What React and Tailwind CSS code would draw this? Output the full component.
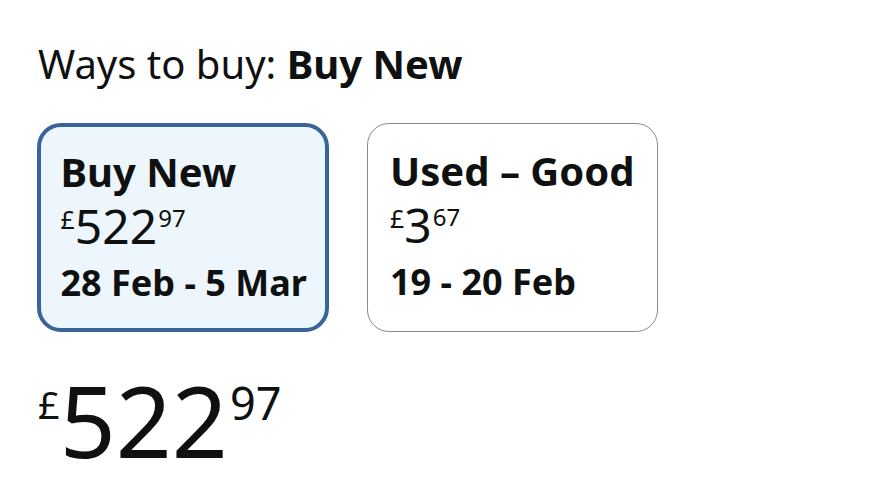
export default function App() {
    return (
        <div className="w-[895px] h-[493px] bg-white text-[#0f1111] px-[38px] pt-[38px] overflow-hidden" style={{ fontFamily: '"Noto Sans", "Open Sans", sans-serif' }}>
            <h2 className="text-[40px] leading-[52px]">
                Ways to buy: <span className="font-bold">Buy New</span>
            </h2>

            <div className="mt-[33px] flex gap-[38px]">
                <div className="w-[292px] h-[209px] -ml-px rounded-[24px] border-[4.5px] border-[#3a6399] bg-[#eef6fd] px-[19.5px] pt-[22.5px]">
                    <div className="text-[40px] font-bold leading-[44px]">Buy New</div>
                    <div className="flex items-start leading-none mt-[8px]">
                        <span className="text-[25px] mt-[5px]">£</span>
                        <span className="text-[48px]">522</span>
                        <span className="text-[24px] mt-[4px] ml-px">97</span>
                    </div>
                    <div className="text-[36px] font-bold leading-[40px] mt-[13px] whitespace-nowrap">28 Feb - 5 Mar</div>
                </div>

                <div className="w-[291px] h-[209px] rounded-[22px] border-[1.5px] border-[#8a8a8a] bg-white px-[22px] pt-[25px]">
                    <div className="text-[40px] font-bold leading-[44px] whitespace-nowrap">Used – Good</div>
                    <div className="flex items-start leading-none mt-[8px]">
                        <span className="text-[25px] mt-[5px]">£</span>
                        <span className="text-[48px]">3</span>
                        <span className="text-[24px] mt-[4px] ml-px">67</span>
                    </div>
                    <div className="text-[36px] font-bold leading-[40px] mt-[13px] whitespace-nowrap">19 - 20 Feb</div>
                </div>
            </div>

            <div className="mt-[39px] flex items-start leading-none">
                <span className="text-[38px] mt-[14px]">£</span>
                <span className="text-[98px]">522</span>
                <span className="text-[45px] mt-[9px] ml-[2px]">97</span>
            </div>
        </div>
    );
}
